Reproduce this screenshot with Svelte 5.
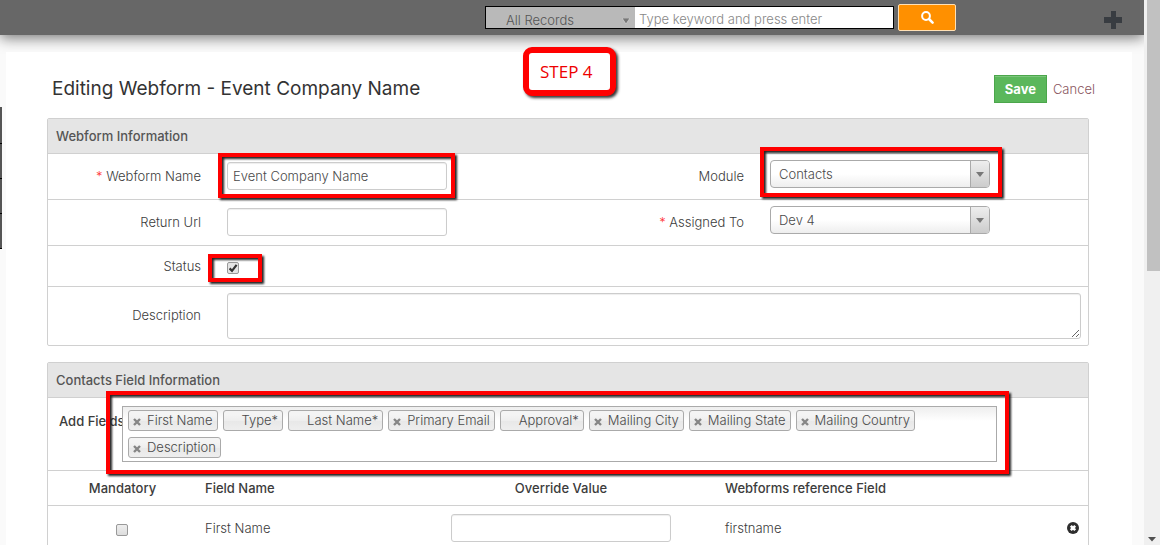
<script>
  const tags = [
    { label: 'First Name', removable: true },
    { label: 'Type*', removable: false },
    { label: 'Last Name*', removable: false },
    { label: 'Primary Email', removable: true },
    { label: 'Approval*', removable: false },
    { label: 'Mailing City', removable: true },
    { label: 'Mailing State', removable: true },
    { label: 'Mailing Country', removable: true },
    { label: 'Description', removable: true }
  ];
  const fields = [{ name: 'First Name', reference: 'firstname' }];
  let name = $state('Event Company Name');
  let active = $state(true);
</script>

<div class="screen">
  <div class="page">
    <header>
      <form class="search" onsubmit={(e) => e.preventDefault()}>
        <div class="search-box">
          <div class="scope">
            <select aria-label="Search in"><option>All Records</option></select>
            <svg width="8" height="6" viewBox="0 0 8 6"><path d="M0 0H8L4 6Z" fill="#777" stroke="#ddd" stroke-width=".6" /></svg>
          </div>
          <input type="text" aria-label="Search" placeholder="Type keyword and press enter" />
        </div>
        <button class="go" aria-label="Run search">
          <svg width="13" height="13" viewBox="0 0 13 13"><circle cx="5" cy="5" r="3.9" fill="none" stroke="#fff" stroke-width="2" /><path d="M8 8L11.6 11.6" stroke="#fff" stroke-width="2.5" stroke-linecap="round" /></svg>
        </button>
      </form>
      <button class="add" aria-label="Quick create">
        <svg width="18" height="18" viewBox="0 0 18 18"><path d="M7 0h5v6h6v6h-6v6H7v-6H0V6h7z" fill="#383c41" /></svg>
      </button>
    </header>

    <nav class="rail" aria-label="Modules"><i></i><i></i><i></i><i></i></nav>

    <main>
      <div class="step">STEP 4</div>
      <div class="title-row">
        <h1>Editing Webform - Event Company Name</h1>
        <button class="save">Save</button>
        <a class="cancel" href="#cancel">Cancel</a>
      </div>

      <section class="panel">
        <h2>Webform Information</h2>
        <div class="row">
          <label for="wf-name"><span class="req">*</span> Webform Name</label>
          <div class="value">
            <div class="marked">
              <input id="wf-name" class="text" type="text" bind:value={name} />
              <span class="mark mark-name"></span>
            </div>
          </div>
          <label for="wf-module">Module</label>
          <div class="value">
            <div class="picker marked">
              <select id="wf-module"><option>Contacts</option></select>
              <span class="arrow"></span>
              <span class="mark mark-module"></span>
            </div>
          </div>
        </div>
        <div class="row">
          <label for="wf-url">Return Url</label>
          <div class="value"><input id="wf-url" class="text" type="text" /></div>
          <label for="wf-owner"><span class="req">*</span> Assigned To</label>
          <div class="value">
            <div class="picker">
              <select id="wf-owner"><option>Dev 4</option></select>
              <span class="arrow"></span>
            </div>
          </div>
        </div>
        <div class="row short">
          <label for="wf-status">Status</label>
          <div class="value">
            <div class="marked">
              <input id="wf-status" class="check" type="checkbox" bind:checked={active} />
              <span class="mark mark-status"></span>
            </div>
          </div>
        </div>
        <div class="row wide">
          <label for="wf-desc">Description</label>
          <div class="value"><textarea id="wf-desc"></textarea></div>
        </div>
      </section>

      <section class="panel">
        <h2>Contacts Field Information</h2>
        <div class="add-row">
          <span class="add-label" id="add-fields">Add Fields</span>
          <div class="tags marked" role="group" aria-labelledby="add-fields">
            {#each tags as tag}
              <span class="tag">
                {#if tag.removable}
                  <button aria-label="Remove {tag.label}">
                    <svg width="8" height="8" viewBox="0 0 8 8"><path d="M1 1L7 7M7 1L1 7" stroke="#868686" stroke-width="2.4" /></svg>
                  </button>
                {/if}
                {tag.label}
              </span>
            {/each}
            <span class="mark mark-tags"></span>
          </div>
        </div>
        <table>
          <thead>
            <tr>
              <th class="c-flag">Mandatory</th>
              <th class="c-name">Field Name</th>
              <th class="c-value">Override Value</th>
              <th>Webforms reference Field</th>
            </tr>
          </thead>
          <tbody>
            {#each fields as field}
              <tr>
                <td class="c-flag"><input class="check" type="checkbox" aria-label="{field.name} is mandatory" /></td>
                <td>{field.name}</td>
                <td class="c-value"><input class="text" type="text" aria-label="Override value for {field.name}" /></td>
                <td>
                  <div class="reference">
                    <span>{field.reference}</span>
                    <button aria-label="Remove {field.name}">
                      <svg width="12" height="12" viewBox="0 0 12 12"><circle cx="6" cy="6" r="6" fill="#2e2e2e" /><path d="M3.8 3.8L8.2 8.2M8.2 3.8L3.8 8.2" stroke="#fff" stroke-width="2.6" /></svg>
                    </button>
                  </div>
                </td>
              </tr>
            {/each}
          </tbody>
        </table>
      </section>
    </main>
  </div>

  <div class="scrollbar" aria-hidden="true">
    <div class="thumb"></div>
    <svg width="8" height="5" viewBox="0 0 8 5"><path d="M0 0H8L4 4.5Z" fill="#505050" /></svg>
  </div>
</div>

<style>
  :global(body) {
    background: #fafafa;
  }
  .screen {
    display: flex;
    height: 100vh;
    overflow: hidden;
    font: 300 13px/20px Inter, sans-serif;
    color: #3c3c3c;
  }
  input,
  select,
  textarea,
  button {
    font: inherit;
    color: inherit;
    margin: 0;
    box-sizing: border-box;
  }
  input,
  select {
    color: #4a4a4a;
  }
  button {
    padding: 0;
    border: 0;
    background: none;
    cursor: pointer;
  }
  svg {
    display: block;
  }
  .page {
    position: relative;
    flex: 1;
    min-width: 0;
    overflow: hidden;
  }
  header {
    display: flex;
    align-items: center;
    justify-content: flex-end;
    height: 35px;
    padding-right: 22px;
    background: #676767;
    box-shadow: 0 3px 14px #777;
  }
  .search {
    display: flex;
    align-items: center;
    gap: 4px;
    height: 37px;
  }
  .search-box {
    display: flex;
    box-sizing: border-box;
    width: 409px;
    height: 23px;
    border: 1px solid #000;
    background: #fff;
  }
  .scope {
    position: relative;
    width: 149px;
    background: #b9b9b9;
  }
  .scope select {
    appearance: none;
    width: 100%;
    height: 21px;
    padding: 3px 20px 0;
    border: 0;
    background: none;
    color: #555;
  }
  .scope svg {
    position: absolute;
    right: 5px;
    top: 11px;
  }
  .search-box input {
    flex: 1;
    min-width: 0;
    padding: 2px 4px 0;
    border: 0;
    background: none;
  }
  .search-box input::placeholder {
    color: #888;
  }
  .go {
    display: grid;
    place-items: center;
    width: 58px;
    height: 27px;
    border: 1px solid #ffe0b5;
    border-radius: 2px;
    background: #ff9000;
  }
  .add {
    margin: 5px 0 0 148px;
  }
  .rail {
    position: absolute;
    left: 0;
    top: 107px;
    width: 2px;
    padding-top: 2px;
    background: #555;
  }
  .rail i {
    display: block;
    height: 34px;
    border-bottom: 1px solid #000;
  }
  main {
    position: relative;
    margin: 17px 12px 0 6px;
    padding: 23px 43px 0 41px;
    background: #fff;
  }
  .step {
    position: absolute;
    left: 517px;
    top: -5px;
    padding: 7px 17px 6px 11px;
    border: 6px solid #f00;
    border-radius: 9px;
    background: #fff;
    box-shadow: 2px 2px 3px #333;
    color: #e00;
    font: 17px/24px "Open Sans", sans-serif;
  }
  .title-row {
    display: flex;
    align-items: center;
    margin: 0 -6px 15px 5px;
  }
  h1 {
    flex: 1;
    margin: 0;
    font-size: 19px;
    line-height: 28px;
    font-weight: 400;
    color: #333;
  }
  .save {
    width: 53px;
    height: 28px;
    border: 1px solid #4ba64b;
    background: #5bb75b;
    box-shadow: inset 0 1px 0 #7cc57c;
    color: #fff;
    font-weight: 700;
  }
  .cancel {
    margin-left: 6px;
    color: #8a5560;
    text-decoration: none;
  }
  .panel {
    margin-bottom: 16px;
    border: 1px solid #d0d0d0;
    border-radius: 2px;
  }
  h2 {
    margin: 0;
    padding: 7px 8px;
    background: #e5e5e5;
    font-size: 13px;
    line-height: 20px;
    font-weight: 500;
    color: #555;
  }
  .row {
    display: grid;
    grid-template-columns: 166px 1fr 166px 331px;
    border-top: 1px solid #d0d0d0;
  }
  .row label {
    padding: 12px 13px 0 0;
    text-align: right;
  }
  .row .value {
    padding: 8px 8px 9px 13px;
  }
  .row .value:last-child .picker {
    margin: -2px 0 2px;
  }
  .row.short .value {
    padding: 16px 13px 12px;
  }
  .row.short label {
    padding-top: 10px;
  }
  .row.wide {
    grid-template-columns: 166px 1fr;
  }
  .row.wide .value {
    padding: 6px 7px 6px 13px;
  }
  .row.wide label {
    padding-top: 18px;
  }
  .req {
    color: #f33;
  }
  .marked {
    position: relative;
    width: fit-content;
  }
  .mark {
    position: absolute;
    border: 4px solid #f00;
    filter: drop-shadow(2px 2px 1px #222);
    pointer-events: none;
  }
  .mark-name {
    inset: -9px -8px -8px -9px;
  }
  .mark-module {
    inset: -13px -12px -9px -10px;
  }
  .mark-status {
    inset: -8px -23px -8px -19px;
  }
  .mark-tags {
    inset: -16px -13px -13px -17px;
  }
  .text,
  textarea {
    display: block;
    border: 1px solid #ccc;
    border-radius: 3px;
    background: #fff;
    box-shadow: inset 0 1px 1px #eee;
  }
  .text {
    width: 220px;
    height: 28px;
    padding: 0 5px;
  }
  textarea {
    width: 100%;
    height: 46px;
    resize: vertical;
  }
  .picker {
    position: relative;
    width: 220px;
  }
  .picker select {
    display: block;
    appearance: none;
    width: 100%;
    height: 28px;
    padding: 0 30px 0 8px;
    border: 1px solid #aaa;
    border-radius: 4px;
    background: linear-gradient(#fff 50%, #eee);
  }
  .arrow {
    position: absolute;
    top: 1px;
    right: 1px;
    width: 18px;
    height: 26px;
    border-left: 1px solid #aaa;
    border-radius: 0 3px 3px 0;
    background: linear-gradient(#eee, #ccc);
    pointer-events: none;
  }
  .arrow::after {
    content: "";
    position: absolute;
    left: 5px;
    top: 11px;
    border: 4px solid transparent;
    border-top: 5px solid #777;
    border-bottom: 0;
  }
  .check {
    display: block;
    appearance: none;
    width: 12px;
    height: 12px;
    border: 1px solid #999;
    border-radius: 2px;
    background: linear-gradient(#eee, #ddd);
  }
  .check:checked {
    background: #e4e4e4 url("data:image/svg+xml,%3Csvg xmlns='http://www.w3.org/2000/svg' viewBox='0 0 10 10'%3E%3Cpath d='M1.6 5.4L4 7.8L8.6 1.8' fill='none' stroke='%23333' stroke-width='2.2'/%3E%3C/svg%3E");
  }
  .add-row {
    display: flex;
    padding: 8px 91px 8px 11px;
    border-top: 1px solid #d0d0d0;
  }
  .add-label {
    width: 63px;
    padding-top: 5px;
    font-weight: 500;
    white-space: nowrap;
  }
  .tags {
    display: flex;
    flex: 1;
    flex-wrap: wrap;
    gap: 6px 5px;
    padding: 3px 5px;
    border: 1px solid #aaa;
    background: linear-gradient(#eee, #fff 14px);
  }
  .tag {
    position: relative;
    padding: 0 4px 0 18px;
    border: 1px solid #aaa;
    border-radius: 3px;
    background: linear-gradient(#f4f4f4 20%, #eee 50%, #e8e8e8 52%, #eee);
    line-height: 19px;
    white-space: nowrap;
    color: #4a4a4a;
  }
  .tag button {
    position: absolute;
    left: 4px;
    top: 7px;
  }
  table {
    width: 100%;
    border-collapse: collapse;
    table-layout: fixed;
  }
  th {
    padding: 7px 8px;
    border-top: 1px solid #d0d0d0;
    font-weight: 500;
    text-align: left;
  }
  td {
    padding: 8px;
    border-top: 1px solid #d0d0d0;
    vertical-align: middle;
  }
  .c-flag {
    width: 133px;
    text-align: center;
  }
  .c-name {
    width: 192px;
  }
  .c-value {
    width: 296px;
    text-align: center;
  }
  td.c-flag {
    padding: 12px 9px 8px 8px;
  }
  td :is(.check, .text) {
    margin: 0 auto;
  }
  .reference {
    display: flex;
    align-items: center;
    justify-content: space-between;
    padding-right: 1px;
  }
  .scrollbar {
    display: flex;
    flex-direction: column;
    justify-content: space-between;
    align-items: center;
    width: 16px;
    padding-bottom: 3px;
    box-sizing: border-box;
    background: #f0f0f0;
  }
  .thumb {
    width: 13px;
    height: 50%;
    margin-left: 2px;
    background: #c1c1c1;
  }
</style>
